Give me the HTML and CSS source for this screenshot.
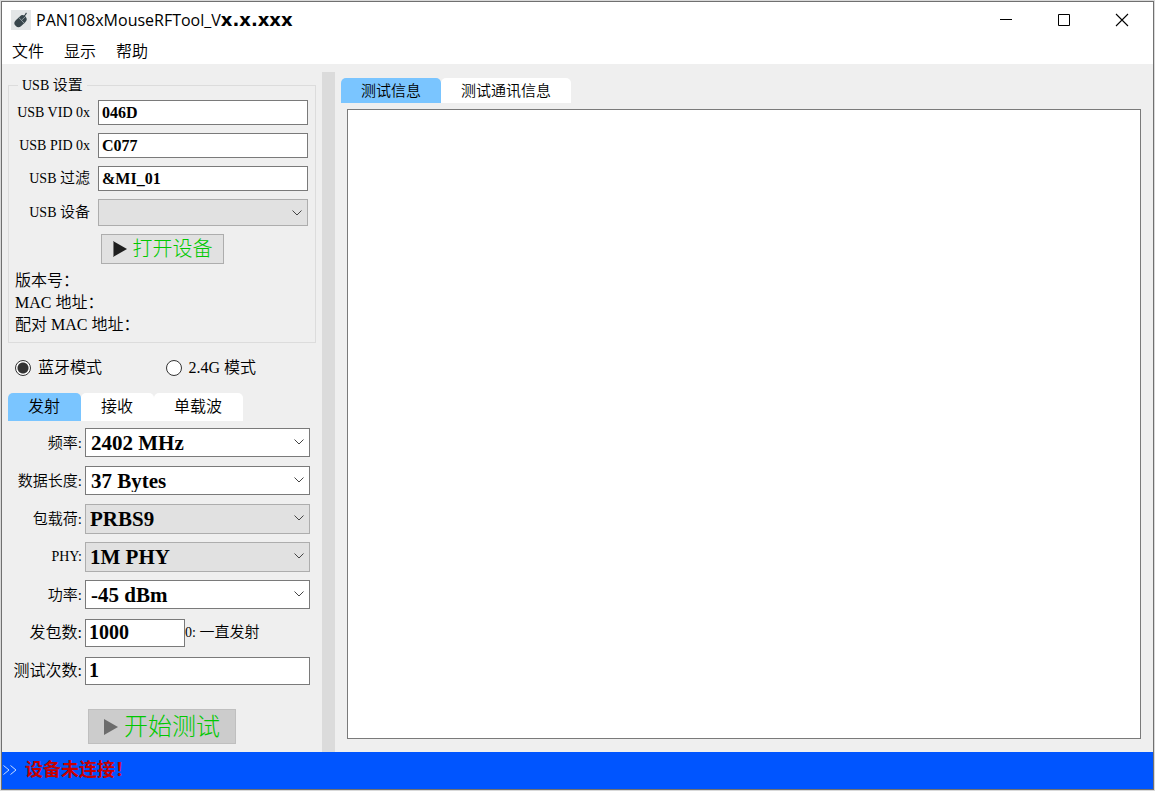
FILE: index.html
```html
<!DOCTYPE html>
<html lang="zh-CN">
<head>
<meta charset="utf-8">
<title>PAN108xMouseRFTool</title>
<link rel="stylesheet" href="styles.css">
</head>
<body>
<div class="window">
  <header class="titlebar">
    <svg class="app-icon" width="20" height="20" viewBox="0 0 20 20" aria-hidden="true">
      <rect width="20" height="20" fill="#e3e6e7"/>
      <g transform="rotate(47 9 11)">
        <rect x="5.500" y="4" width="8" height="13.500" rx="4" fill="#38464c"/>
        <path d="M5.500 9.500h8M9.500 4v5.500" stroke="#9aa6ab" stroke-width="0.800"/>
      </g>
      <path d="M13 6c1.500-.5 1.500-2 2.500-3" fill="none" stroke="#38464c" stroke-width="1.200"/>
    </svg>
    <h1 class="title">PAN108xMouseRFTool_V<span class="version">x.x.xxx</span></h1>
    <div class="controls">
      <button type="button" class="control" aria-label="最小化"><svg width="14" height="14" viewBox="0 0 14 14"><path d="M1 6.500h12" stroke="#000"/></svg></button>
      <button type="button" class="control" aria-label="最大化"><svg width="14" height="14" viewBox="0 0 14 14"><path d="M1.500 1.500h11v11h-11z" fill="none" stroke="#000"/></svg></button>
      <button type="button" class="control" aria-label="关闭"><svg width="14" height="14" viewBox="0 0 14 14"><path d="M1 1l12 12M13 1L1 13" stroke="#000" stroke-width="1.100"/></svg></button>
    </div>
  </header>
  <nav class="menubar">
    <button type="button" class="menu">文件</button>
    <button type="button" class="menu">显示</button>
    <button type="button" class="menu">帮助</button>
  </nav>
  <main class="workspace">
    <section class="sidebar">
      <fieldset class="group">
        <legend class="legend"><span class="latin">USB </span>设置</legend>
        <div class="usb-grid">
          <label class="label latin" for="vid">USB VID 0x</label>
          <input class="text" id="vid" value="046D">
          <label class="label latin" for="pid">USB PID 0x</label>
          <input class="text" id="pid" value="C077">
          <label class="label" for="filter"><span class="latin">USB </span>过滤</label>
          <input class="text" id="filter" value="&amp;MI_01">
          <label class="label" for="device"><span class="latin">USB </span>设备</label>
          <div class="combo">
            <select class="select flat short" id="device"><option></option></select>
            <svg class="chevron" width="10" height="6" viewBox="0 0 10 6"><path d="M.5.5L5 5 9.500.5" fill="none" stroke="#444"/></svg>
          </div>
        </div>
        <button type="button" class="action open"><svg width="14" height="16" viewBox="0 0 14 16"><path d="M0 0l14 8-14 8z" fill="#1e1e1e"/><path d="M.5 0v16" stroke="#777"/></svg>打开设备</button>
        <div class="info">
          <p class="line">版本号：</p>
          <p class="line">MAC 地址：</p>
          <p class="line">配对 MAC 地址：</p>
        </div>
      </fieldset>
      <div class="modes">
        <label class="mode"><input class="radio" type="radio" name="mode" checked>蓝牙模式</label>
        <label class="mode"><input class="radio" type="radio" name="mode">2.4G 模式</label>
      </div>
      <div class="tabs main-tabs" role="tablist">
        <button type="button" class="tab active" role="tab" aria-selected="true">发射</button>
        <button type="button" class="tab" role="tab" aria-selected="false">接收</button>
        <button type="button" class="tab" role="tab" aria-selected="false">单载波</button>
      </div>
      <div class="form">
        <label class="label" for="freq">频率:</label>
        <div class="combo">
          <select class="select" id="freq"><option>2402 MHz</option></select>
          <svg class="chevron" width="10" height="6" viewBox="0 0 10 6"><path d="M.5.5L5 5 9.500.5" fill="none" stroke="#444"/></svg>
        </div>
        <label class="label" for="len">数据长度:</label>
        <div class="combo">
          <select class="select" id="len"><option>37 Bytes</option></select>
          <svg class="chevron" width="10" height="6" viewBox="0 0 10 6"><path d="M.5.5L5 5 9.500.5" fill="none" stroke="#444"/></svg>
        </div>
        <label class="label" for="payload">包载荷:</label>
        <div class="combo">
          <select class="select flat" id="payload"><option>PRBS9</option></select>
          <svg class="chevron" width="10" height="6" viewBox="0 0 10 6"><path d="M.5.5L5 5 9.500.5" fill="none" stroke="#444"/></svg>
        </div>
        <label class="label latin" for="phy">PHY:</label>
        <div class="combo">
          <select class="select flat" id="phy"><option>1M PHY</option></select>
          <svg class="chevron" width="10" height="6" viewBox="0 0 10 6"><path d="M.5.5L5 5 9.500.5" fill="none" stroke="#444"/></svg>
        </div>
        <label class="label" for="power">功率:</label>
        <div class="combo">
          <select class="select" id="power"><option>-45 dBm</option></select>
          <svg class="chevron" width="10" height="6" viewBox="0 0 10 6"><path d="M.5.5L5 5 9.500.5" fill="none" stroke="#444"/></svg>
        </div>
        <label class="label large" for="packets">发包数:</label>
        <div class="packets">
          <input class="text big" id="packets" value="1000">
          <span class="hint"><span class="latin">0: </span>一直发射</span>
        </div>
        <label class="label large" for="times">测试次数:</label>
        <input class="text big" id="times" value="1">
      </div>
      <button type="button" class="action start"><svg width="14" height="16" viewBox="0 0 14 16"><path d="M0 0l14 8-14 8z" fill="#6c6c6c"/></svg>开始测试</button>
    </section>
    <div class="splitter"></div>
    <section class="output">
      <div class="tabs" role="tablist">
        <button type="button" class="tab active" role="tab" aria-selected="true">测试信息</button>
        <button type="button" class="tab" role="tab" aria-selected="false">测试通讯信息</button>
      </div>
      <textarea class="log" aria-label="测试信息"></textarea>
    </section>
  </main>
  <footer class="status">
    <svg width="14" height="10" viewBox="0 0 14 10"><path d="M.5.5L6 5 .5 9.500M7.500.5L13 5 7.500 9.500" fill="none" stroke="#c8dcff"/></svg>
    <span class="message">设备未连接！</span>
  </footer>
</div>
</body>
</html>
```

FILE: styles.css
```css
* {
  box-sizing: border-box;
}

body {
  margin: 0;
  padding: 1px;
  background: #d9d9d9;
  color: #000;
  font: 16px/22px "Liberation Serif", "Noto Sans CJK SC", serif;
  font-weight: 350;
}

button,
input,
select,
textarea {
  margin: 0;
  color: inherit;
  font: inherit;
  border-radius: 0;
}

.window {
  display: flex;
  flex-direction: column;
  min-height: calc(100vh - 2px);
  border: 1px solid #707070;
  background: #efefef;
}

.titlebar {
  display: flex;
  align-items: center;
  height: 36px;
  padding-left: 9px;
  background: #fff;
}

.title {
  margin: 0 0 0 5px;
  font: 400 16px/24px "Open Sans", sans-serif;
}

.version {
  font: 700 18px/24px "DejaVu Sans", sans-serif;
}

.controls {
  display: flex;
  margin: 0 2px 0 auto;
}

.control {
  display: grid;
  place-items: center;
  width: 58px;
  height: 36px;
  padding: 0;
  border: 0;
  background: none;
}

.menubar {
  display: flex;
  gap: 20px;
  padding: 3px 10px 1px;
  background: #fff;
}

.menu {
  padding: 0;
  border: 0;
  background: none;
}

.workspace {
  display: flex;
  flex: 1;
}

.sidebar {
  display: flex;
  flex-direction: column;
  width: 320px;
  padding: 10px 6px 7px;
}

.group {
  margin: 0;
  padding: 3px 7px 6px 5px;
  border: 1px solid #dcdcdc;
}

.legend {
  margin-left: 4px;
  padding: 0 4px;
  font-size: 15px;
}

.latin {
  font-size: 14px;
  white-space: pre;
}

.usb-grid {
  display: grid;
  grid-template-columns: 76px 1fr;
  gap: 8px;
  align-items: center;
}

.label {
  justify-self: end;
  font-size: 15px;
  white-space: nowrap;
}

.label.latin {
  font-size: 14px;
}

.label.large {
  font-size: 16px;
}

.text {
  width: 100%;
  height: 25px;
  padding: 0 3px;
  border: 1px solid #7a7a7a;
  background: #fff;
  font-weight: 700;
}

.combo {
  position: relative;
}

.select {
  display: block;
  width: 100%;
  height: 29px;
  padding: 0 24px 0 5px;
  border: 1px solid #7a7a7a;
  background: #fff;
  appearance: none;
  font-size: 21px;
  font-weight: 700;
}

.select.flat {
  height: 30px;
  padding-left: 4px;
  border-color: #adadad;
  background: #e1e1e1;
}

.select.short {
  height: 27px;
}

.chevron {
  position: absolute;
  top: 11px;
  right: 6px;
  pointer-events: none;
}

.action {
  display: flex;
  align-items: center;
  justify-content: center;
  gap: 6px;
  padding: 0;
  border: 1px solid #adadad;
  background: #e1e1e1;
  color: #00c800;
  font-weight: 300;
}

.open {
  width: 123px;
  height: 30px;
  margin: 8px 0 0 87px;
  font-size: 20px;
}

.start {
  width: 148px;
  height: 35px;
  margin: 24px 0 0 80px;
  border-color: #bfbfbf;
  background: #ccc;
  font-size: 24px;
}

.info {
  margin-top: 6px;
  padding-left: 1px;
}

.line {
  margin: 0;
}

.modes {
  display: flex;
  padding: 14px 0 0 7px;
}

.mode {
  display: flex;
  align-items: center;
  width: 151px;
}

.radio {
  appearance: none;
  width: 16px;
  height: 16px;
  margin-right: 7px;
  border: 1px solid #333;
  border-radius: 50%;
  background: #fff;
}

.radio:checked {
  background: radial-gradient(circle, #333 5px, #fff 6px);
}

.tabs {
  display: flex;
}

.tab {
  padding: 0 20px;
  height: 25px;
  border: 0;
  border-radius: 5px 5px 0 0;
  background: #fff;
  font-size: 15px;
}

.tab.active {
  background: #7ac5ff;
}

.main-tabs {
  margin-top: 14px;
}

.main-tabs .tab {
  height: 28px;
  padding: 0 21px 0 20px;
  font-size: 16px;
}

.form {
  display: grid;
  grid-template-columns: 74px 225px;
  grid-auto-rows: 29px;
  gap: 9px 3px;
  align-items: center;
  margin-top: 7px;
}

.text.big {
  height: 28px;
  font-size: 20px;
}

.packets {
  display: flex;
  align-items: center;
}

.packets .text {
  width: 100px;
}

.hint {
  font-size: 15px;
}

.splitter {
  width: 13px;
  margin-top: 8px;
  background: #dbdbdb;
}

.output {
  display: flex;
  flex: 1;
  flex-direction: column;
  padding: 14px 12px 13px 6px;
}

.log {
  flex: 1;
  margin: 6px 0 0 6px;
  border: 1px solid #7a7a7a;
  background: #fff;
  resize: none;
}

.status {
  display: flex;
  align-items: center;
  gap: 8px;
  height: 37px;
  padding: 0 0 2px 1px;
  background: #0055ff;
}

.message {
  color: #c80000;
  font-size: 18px;
  font-weight: 700;
}
```
